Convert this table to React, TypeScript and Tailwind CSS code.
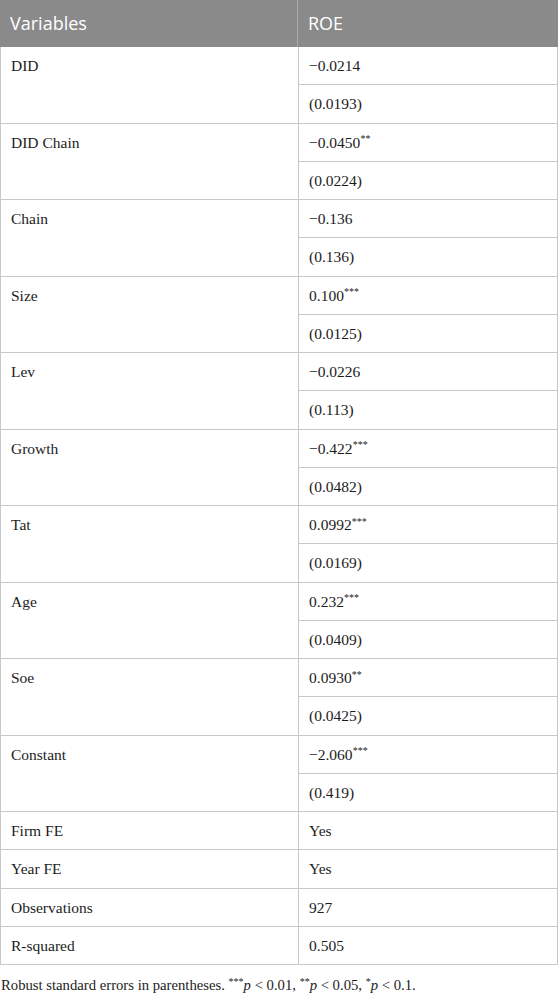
import React from 'react';

interface PairRow {
  name: string;
  coef: string;
  stars?: string;
  se: string;
}

const pairRows: PairRow[] = [
  { name: 'DID', coef: '\u22120.0214', se: '(0.0193)' },
  { name: 'DID Chain', coef: '\u22120.0450', stars: '**', se: '(0.0224)' },
  { name: 'Chain', coef: '\u22120.136', se: '(0.136)' },
  { name: 'Size', coef: '0.100', stars: '***', se: '(0.0125)' },
  { name: 'Lev', coef: '\u22120.0226', se: '(0.113)' },
  { name: 'Growth', coef: '\u22120.422', stars: '***', se: '(0.0482)' },
  { name: 'Tat', coef: '0.0992', stars: '***', se: '(0.0169)' },
  { name: 'Age', coef: '0.232', stars: '***', se: '(0.0409)' },
  { name: 'Soe', coef: '0.0930', stars: '**', se: '(0.0425)' },
  { name: 'Constant', coef: '\u22122.060', stars: '***', se: '(0.419)' },
];

const singleRows = [
  ['Firm FE', 'Yes'],
  ['Year FE', 'Yes'],
  ['Observations', '927'],
  ['R-squared', '0.505'],
];

const cell = 'flex items-center px-[10px] border-b border-[#c8c8c8]';

export default function App() {
  return (
    <div className="w-[558px] bg-white text-[#1c1c1c]">
      {/* Header */}
      <div
        className="grid grid-cols-[298px_1fr] h-[47px] bg-[#8a8a8a] text-white text-[18px]"
        style={{ fontFamily: '"Open Sans", sans-serif' }}
      >
        <div className="flex items-center pl-[10px] border-r border-[#a9a9a9]">Variables</div>
        <div className="flex items-center pl-[10px]">ROE</div>
      </div>

      <div
        className="grid grid-cols-[298px_1fr] auto-rows-[38.25px] border-x border-[#c8c8c8] text-[15.5px]"
        style={{ fontFamily: '"Liberation Serif", serif' }}
      >
        {pairRows.map(r => (
          <React.Fragment key={r.name}>
            <div className="row-span-2 px-[10px] border-b border-r border-[#c8c8c8]">
              <div className="h-[38px] flex items-center">{r.name}</div>
            </div>
            <div className={cell}>
              {r.coef}
              {r.stars && <sup className="text-[10px] top-[-0.3em]">{r.stars}</sup>}
            </div>
            <div className={cell}>{r.se}</div>
          </React.Fragment>
        ))}

        {singleRows.map(([name, value]) => (
          <React.Fragment key={name}>
            <div className={`${cell} border-r`}>{name}</div>
            <div className={cell}>{value}</div>
          </React.Fragment>
        ))}
      </div>

      <p
        className="mt-[9px] pl-[1px] text-[14.7px] text-[#1c1c1c]"
        style={{ fontFamily: '"Liberation Serif", serif' }}
      >
        Robust standard errors in parentheses. <sup className="text-[10px]">***</sup>
        <i>p</i> &lt; 0.01, <sup className="text-[10px]">**</sup>
        <i>p</i> &lt; 0.05, <sup className="text-[10px]">*</sup>
        <i>p</i> &lt; 0.1.
      </p>
    </div>
  );
}
